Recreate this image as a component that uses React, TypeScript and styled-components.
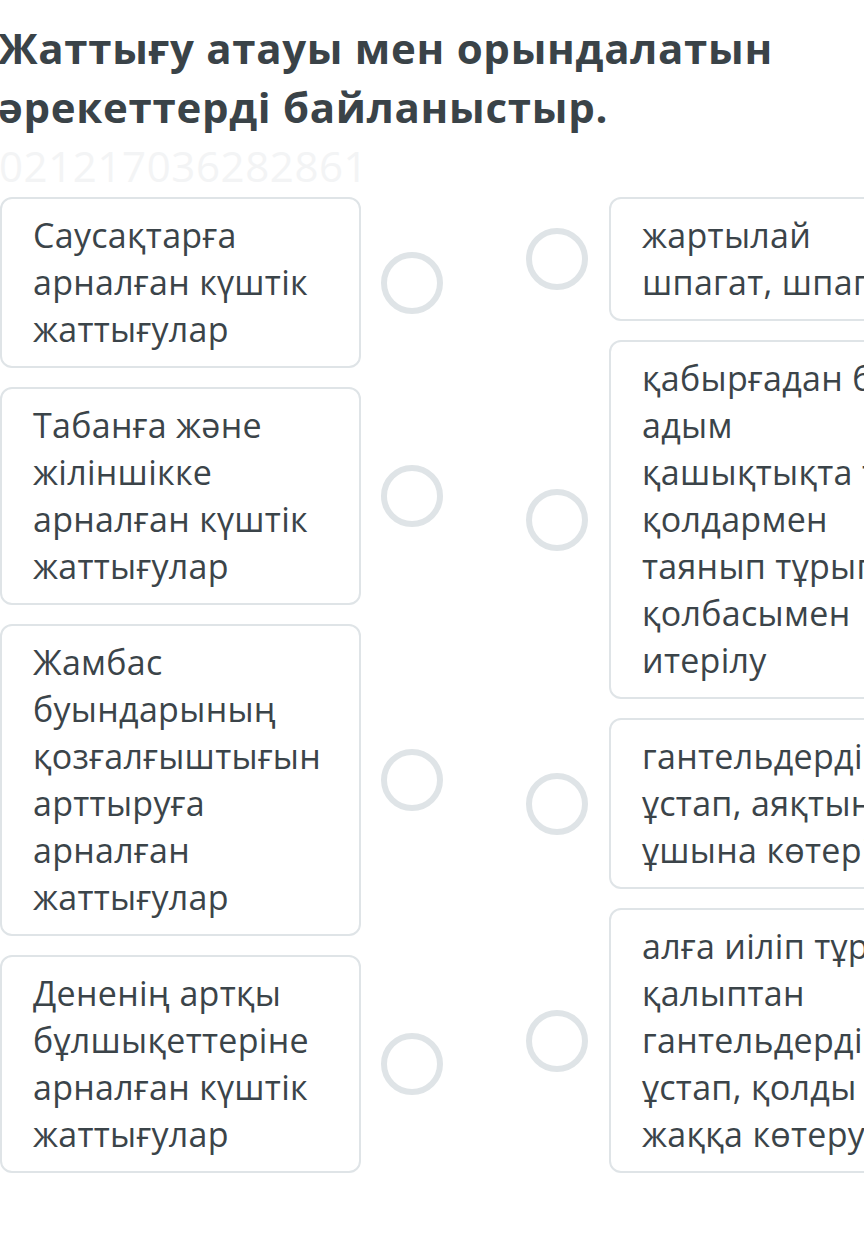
import React from "react";
import styled, { createGlobalStyle } from "styled-components";

const Global = createGlobalStyle`
  html, body {
    margin: 0;
    padding: 0;
    background: #ffffff;
    overflow-x: hidden;
  }
  body {
    font-family: "Open Sans", "Noto Sans", sans-serif;
    color: #3b4449;
  }
`;

const Page = styled.main`
  padding-top: 18px;
  width: 864px;
  overflow: hidden;
`;

const Title = styled.h1`
  margin: 0 0 0 -2px;
  font-size: 42px;
  line-height: 59px;
  font-weight: 700;
  letter-spacing: 0.7px;
  color: #3a4348;
`;

const Code = styled.div`
  margin: 0 0 2px -1px;
  font-size: 42px;
  line-height: 59px;
  font-weight: 400;
  letter-spacing: 0.6px;
  color: #f3f4f5;
`;

const Board = styled.div`
  display: flex;
  align-items: flex-start;
  gap: 83px;
`;

const Column = styled.div`
  display: flex;
  flex-direction: column;
  gap: 19px;
  flex-shrink: 0;
`;

const Item = styled.div<{ $side: "left" | "right" }>`
  display: flex;
  align-items: center;
  gap: ${(p) => (p.$side === "left" ? "20px" : "21px")};
`;

const Card = styled.div`
  box-sizing: border-box;
  width: 361px;
  flex-shrink: 0;
  padding: 13px 12px 13px 31px;
  border: 2px solid #dfe4e7;
  border-radius: 12px;
  background: #ffffff;
  font-size: 34px;
  line-height: 47px;
  letter-spacing: 0.3px;
  color: #3b4449;
  white-space: pre-line;
`;

const RightCard = styled(Card)`
  white-space: pre;
`;

const Dot = styled.div`
  box-sizing: border-box;
  width: 62px;
  height: 62px;
  flex-shrink: 0;
  border-radius: 50%;
  border: 6px solid #dfe4e7;
  background: #ffffff;
`;

const left = [
  "Саусақтарға\nарналған күштік\nжаттығулар",
  "Табанға және\nжіліншікке\nарналған күштік\nжаттығулар",
  "Жамбас\nбуындарының\nқозғалғыштығын\nарттыруға\nарналған\nжаттығулар",
  "Дененің артқы\nбұлшықеттеріне\nарналған күштік\nжаттығулар",
];

const right = [
  "жартылай\nшпагат, шпагат",
  "қабырғадан бір\nадым\nқашықтықта тұрып\nқолдармен\nтаянып тұрып\nқолбасымен\nитерілу",
  "гантельдерді\nұстап, аяқтың\nұшына көтерілу",
  "алға иіліп тұрған\nқалыптан\nгантельдерді\nұстап, қолды екі\nжаққа көтеру",
];

export default function App() {
  return (
    <Page>
      <Global />
      <Title>
        Жаттығу атауы мен орындалатын
        <br />
        әрекеттерді байланыстыр.
      </Title>
      <Code>021217036282861</Code>
      <Board>
        <Column>
          {left.map((t) => (
            <Item key={t} $side="left">
              <Card>{t}</Card>
              <Dot />
            </Item>
          ))}
        </Column>
        <Column>
          {right.map((t) => (
            <Item key={t} $side="right">
              <Dot />
              <RightCard>{t}</RightCard>
            </Item>
          ))}
        </Column>
      </Board>
    </Page>
  );
}
